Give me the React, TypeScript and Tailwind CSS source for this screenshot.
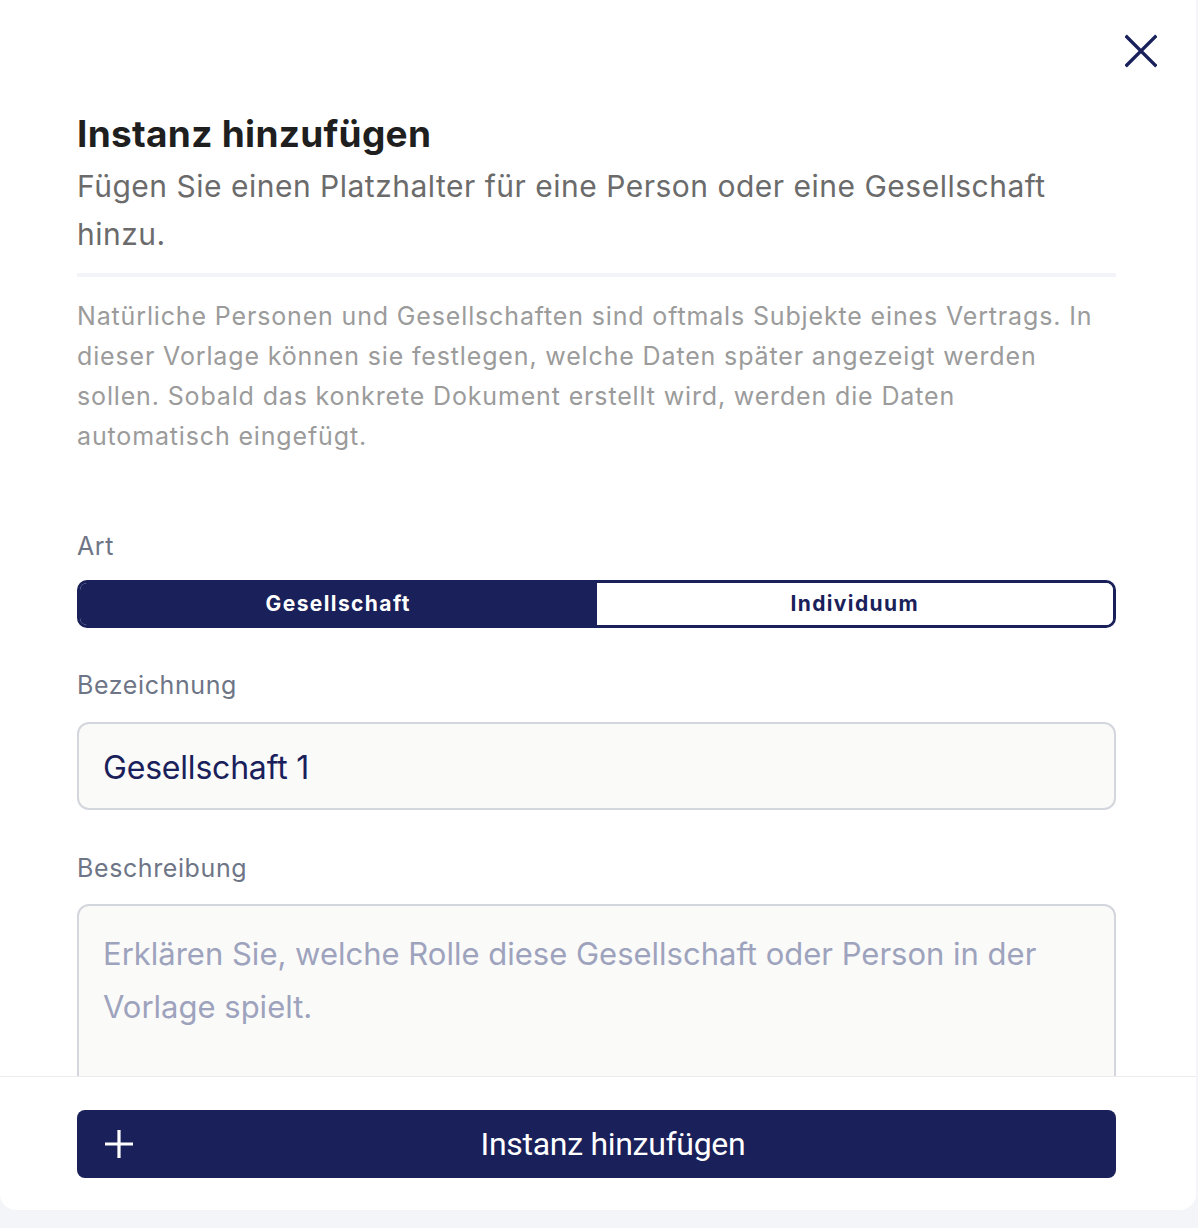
import React from "react";

const navy = "#19205a";

export default function App() {
  return (
    <div className="w-[1198px] h-[1228px] bg-[#f4f5f8] overflow-hidden" style={{ fontFamily: "Inter, 'Noto Sans', sans-serif" }}>
      <div className="w-[1196px] h-[1210px] bg-white rounded-b-[16px] flex flex-col overflow-hidden">
        {/* Scrollable body */}
        <div className="flex-1 overflow-hidden pl-[77px] pr-[80px]">
          <div className="flex justify-end pt-[35px] -mr-[41px]">
            <button className="w-[32px] h-[32px] flex items-center justify-center">
              <svg width="34" height="34" viewBox="0 0 34 34" fill="none">
                <path d="M2 2 L32 32 M32 2 L2 32" stroke={navy} strokeWidth="3.6" strokeLinecap="square" />
              </svg>
            </button>
          </div>

          <h1 className="mt-[45px] text-[37px] leading-[44px] font-bold text-[#1f1f1f] tracking-[0.3px]">
            Instanz hinzufügen
          </h1>
          <p className="mt-[6px] text-[30px] leading-[48px] text-[#6b6b6b] tracking-[0.5px]">
            Fügen Sie einen Platzhalter für eine Person oder eine Gesellschaft hinzu.
          </p>

          <div className="mt-[15px] h-[4px] bg-[#f3f4f9]" />

          <p className="mt-[19px] text-[25px] leading-[40px] text-[#9b9b9b] tracking-[0.85px]">
            Natürliche Personen und Gesellschaften sind oftmals Subjekte eines Vertrags. In dieser Vorlage können sie festlegen, welche Daten später angezeigt werden sollen. Sobald das konkrete Dokument erstellt wird, werden die Daten automatisch eingefügt.
          </p>

          <label className="block mt-[74px] text-[25px] leading-[32px] text-[#6e7587] tracking-[0.6px]">Art</label>
          <div className="mt-[18px] h-[48px] flex rounded-[10px] border-[3px] border-[#19205a] overflow-hidden">
            <button className="flex-1 bg-[#19205a] text-white text-[21px] font-bold tracking-[1.4px]">
              Gesellschaft
            </button>
            <button className="flex-1 bg-white text-[#19205a] text-[21px] font-bold tracking-[1.4px]">
              Individuum
            </button>
          </div>

          <label className="block mt-[41px] text-[25px] leading-[32px] text-[#6e7587] tracking-[0.6px]">Bezeichnung</label>
          <div className="mt-[21px] h-[88px] rounded-[12px] border-2 border-[#d3d6dc] bg-[#fafaf9] flex items-center px-[24px] pt-[3px]">
            <span className="text-[32px] text-[#19205a] tracking-[-0.2px]">Gesellschaft 1</span>
          </div>

          <label className="block mt-[42px] text-[25px] leading-[32px] text-[#6e7587] tracking-[0.6px]">Beschreibung</label>
          <div className="mt-[20px] h-[300px] rounded-[12px] border-2 border-[#d3d6dc] bg-[#fafaf9] px-[24px] pt-[21px]">
            <p className="text-[31px] leading-[53px] text-[#9ea3bd]">
              Erklären Sie, welche Rolle diese Gesellschaft oder Person in der Vorlage spielt.
            </p>
          </div>
        </div>

        {/* Footer */}
        <div className="border-t border-[#ececef] pl-[77px] pr-[80px] pt-[33px] pb-[32px]">
          <button className="w-full h-[68px] rounded-[8px] bg-[#19205a] flex items-center pl-[28px] pr-[23px]">
            <svg width="28" height="28" viewBox="0 0 28 28" fill="none">
              <path d="M14 0 V28 M0 14 H28" stroke="white" strokeWidth="3.2" />
            </svg>
            <span className="flex-1 text-center text-white text-[32px] tracking-[-0.3px]" style={{ fontFamily: "Roboto, sans-serif" }}>
              Instanz hinzufügen
            </span>
          </button>
        </div>
      </div>
    </div>
  );
}
